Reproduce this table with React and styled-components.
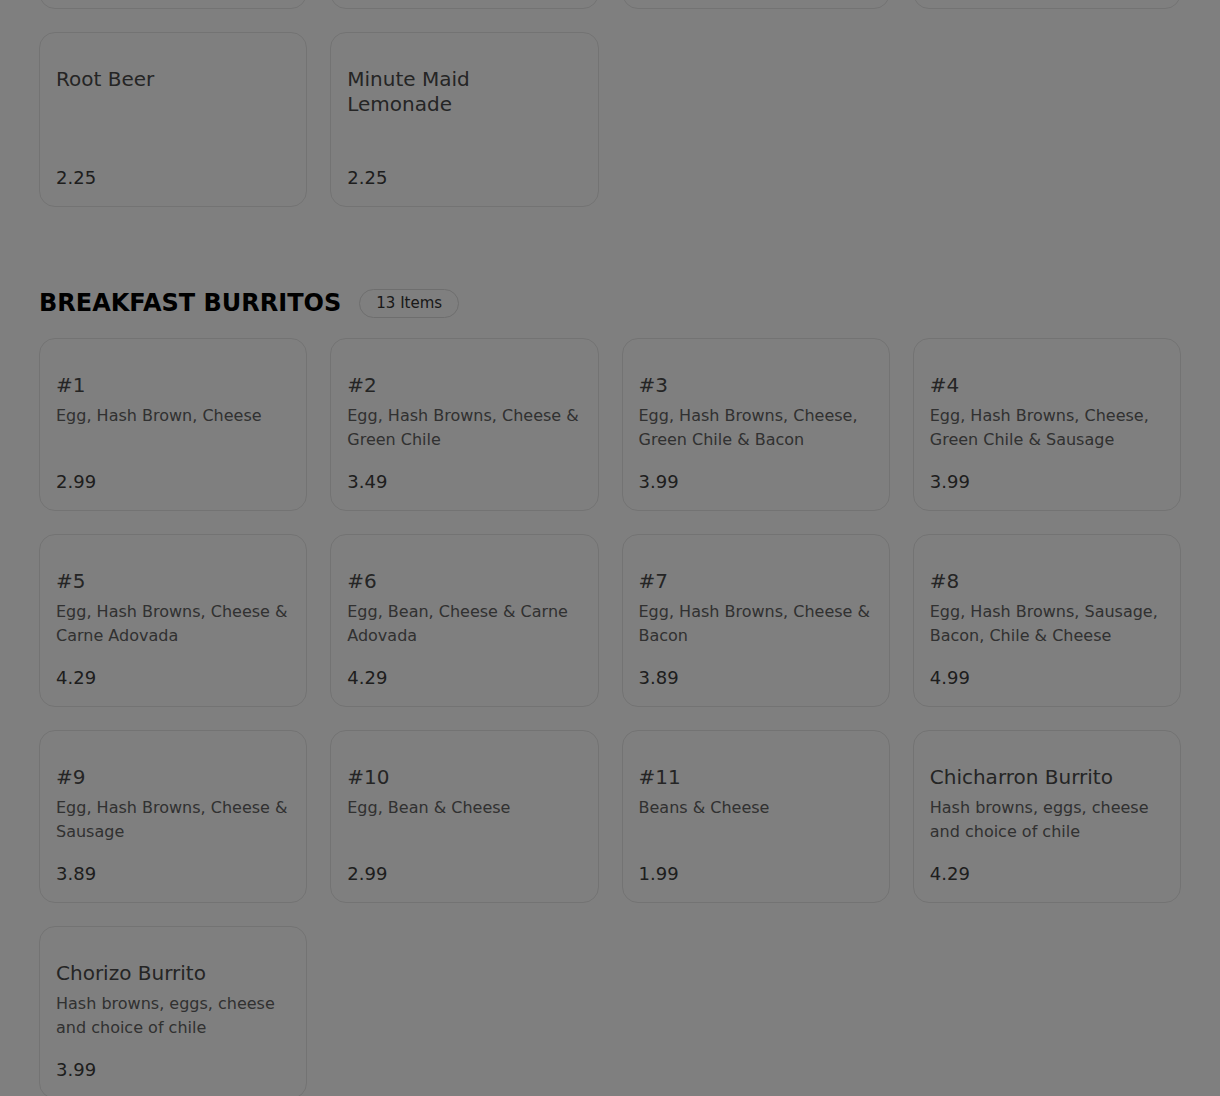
import styled, { createGlobalStyle } from "styled-components";

const GlobalStyle = createGlobalStyle`
  body {
    margin: 0;
    background: #ffffff;
    font-family: "DejaVu Sans", "Noto Sans", sans-serif;
  }
`;

const Page = styled.div`
  padding: 0 39px;
  margin-top: -166px;
`;

const Section = styled.section`
  margin-bottom: 81px;
`;

const SectionHeader = styled.div`
  display: flex;
  align-items: center;
  gap: 18px;
  height: 30px;
  margin-bottom: 20px;
`;

const SectionTitle = styled.h2`
  margin: 0;
  font-size: 24px;
  font-weight: 600;
  color: #000;
`;

const CountBadge = styled.span`
  display: inline-flex;
  align-items: center;
  height: 27px;
  padding: 0 16px;
  border: 1px solid #dcdcdc;
  border-radius: 999px;
  font-size: 15px;
  color: #333;
`;

const Grid = styled.div`
  display: grid;
  grid-template-columns: repeat(4, 1fr);
  gap: 23px;
`;

const Card = styled.div`
  box-sizing: border-box;
  min-height: ${(props) => props.minHeight || 173}px;
  display: flex;
  flex-direction: column;
  padding: 34px 16px 16px;
  border: 1px solid #e6e6e6;
  border-radius: 16px;
  background: #fff;
`;

const ItemName = styled.h3`
  margin: 0;
  padding-right: 20px;
  font-size: 20px;
  line-height: 25px;
  font-weight: 500;
  color: #4a4a4a;
`;

const ItemDesc = styled.p`
  margin: 6px 0 0;
  font-size: 16px;
  line-height: 24px;
  font-weight: 400;
  color: #626262;
`;

const ItemPrice = styled.div`
  margin-top: auto;
  padding-top: 16px;
  font-size: 18px;
  line-height: 24px;
  font-weight: 500;
  color: #3c3c3c;
`;

// Overlay dims the whole page (a modal backdrop)
const Backdrop = styled.div`
  position: fixed;
  inset: 0;
  background: rgba(0, 0, 0, 0.5);
`;

const drinks = [
  { name: "Coke", price: "2.25" },
  { name: "Diet Coke", price: "2.25" },
  { name: "Sprite", price: "2.25" },
  { name: "Dr Pepper", price: "2.25" },
  { name: "Root Beer", price: "2.25" },
  { name: "Minute Maid Lemonade", price: "2.25" },
];

const burritos = [
  { name: "#1", desc: "Egg, Hash Brown, Cheese", price: "2.99" },
  { name: "#2", desc: "Egg, Hash Browns, Cheese & Green Chile", price: "3.49" },
  { name: "#3", desc: "Egg, Hash Browns, Cheese, Green Chile & Bacon", price: "3.99" },
  { name: "#4", desc: "Egg, Hash Browns, Cheese, Green Chile & Sausage", price: "3.99" },
  { name: "#5", desc: "Egg, Hash Browns, Cheese & Carne Adovada", price: "4.29" },
  { name: "#6", desc: "Egg, Bean, Cheese & Carne Adovada", price: "4.29" },
  { name: "#7", desc: "Egg, Hash Browns, Cheese & Bacon", price: "3.89" },
  { name: "#8", desc: "Egg, Hash Browns, Sausage, Bacon, Chile & Cheese", price: "4.99" },
  { name: "#9", desc: "Egg, Hash Browns, Cheese & Sausage", price: "3.89" },
  { name: "#10", desc: "Egg, Bean & Cheese", price: "2.99" },
  { name: "#11", desc: "Beans & Cheese", price: "1.99" },
  { name: "Chicharron Burrito", desc: "Hash browns, eggs, cheese and choice of chile", price: "4.29" },
  { name: "Chorizo Burrito", desc: "Hash browns, eggs, cheese and choice of chile", price: "3.99" },
];

const MenuCard = ({ item, minHeight }) => (
  <Card minHeight={minHeight}>
    <ItemName>{item.name}</ItemName>
    {item.desc && <ItemDesc>{item.desc}</ItemDesc>}
    <ItemPrice>{item.price}</ItemPrice>
  </Card>
);

const App = () => {
  return (
    <>
      <GlobalStyle />
      <Page>
        <Section>
          <Grid>
            {drinks.map((item) => (
              <MenuCard key={item.name} item={item} minHeight={175} />
            ))}
          </Grid>
        </Section>
        <Section>
          <SectionHeader>
            <SectionTitle>BREAKFAST BURRITOS</SectionTitle>
            <CountBadge>13 Items</CountBadge>
          </SectionHeader>
          <Grid>
            {burritos.map((item) => (
              <MenuCard key={item.name} item={item} />
            ))}
          </Grid>
        </Section>
      </Page>
      <Backdrop />
    </>
  );
};

export default App;
